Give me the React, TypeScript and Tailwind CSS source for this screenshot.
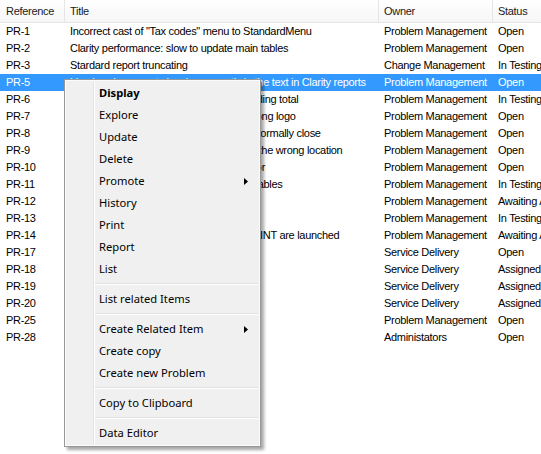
import { Fragment } from "react"

type Row = { ref: string; title: string; owner: string; status: string }

const rows: Row[] = [
  { ref: "PR-1", title: 'Incorrect cast of "Tax codes" menu to StandardMenu', owner: "Problem Management", status: "Open" },
  { ref: "PR-2", title: "Clarity performance: slow to update main tables", owner: "Problem Management", status: "Open" },
  { ref: "PR-3", title: "Stardard report truncating", owner: "Change Management", status: "In Testing" },
  { ref: "PR-5", title: "Line breaks are not showing correctly in the text in Clarity reports", owner: "Problem Management", status: "Open" },
  { ref: "PR-6", title: "Summary report not showing the outstanding total", owner: "Problem Management", status: "In Testing" },
  { ref: "PR-7", title: "Invoices printed from Clarity show the wrong logo", owner: "Problem Management", status: "Open" },
  { ref: "PR-8", title: "Editing windows in Clarity sometimes abnormally close", owner: "Problem Management", status: "Open" },
  { ref: "PR-9", title: "Exported reports are now being saved in the wrong location", owner: "Problem Management", status: "Open" },
  { ref: "PR-10", title: "Login screen displays an unexpected error", owner: "Problem Management", status: "Open" },
  { ref: "PR-11", title: "Slow response when opening all lookup tables", owner: "Problem Management", status: "In Testing" },
  { ref: "PR-12", title: "Unable to log in from remote sites", owner: "Problem Management", status: "Awaiting Approval" },
  { ref: "PR-13", title: "Duplicate entries in audit log", owner: "Problem Management", status: "In Testing" },
  { ref: "PR-14", title: "Errors occurring when multiple jobs of PRINT are launched", owner: "Problem Management", status: "Awaiting Approval" },
  { ref: "PR-17", title: "Printer offline", owner: "Service Delivery", status: "Open" },
  { ref: "PR-18", title: "Email not syncing", owner: "Service Delivery", status: "Assigned" },
  { ref: "PR-19", title: "VPN drops", owner: "Service Delivery", status: "Assigned" },
  { ref: "PR-20", title: "Slow network", owner: "Service Delivery", status: "Assigned" },
  { ref: "PR-25", title: "Server reboot", owner: "Problem Management", status: "Open" },
  { ref: "PR-28", title: "User access", owner: "Administators", status: "Open" },
]

type Item = { label?: string; bold?: boolean; sub?: boolean; sep?: boolean }

const menu: Item[] = [
  { label: "Display", bold: true },
  { label: "Explore" },
  { label: "Update" },
  { label: "Delete" },
  { label: "Promote", sub: true },
  { label: "History" },
  { label: "Print" },
  { label: "Report" },
  { label: "List" },
  { sep: true },
  { label: "List related Items" },
  { sep: true },
  { label: "Create Related Item", sub: true },
  { label: "Create copy" },
  { label: "Create new Problem" },
  { sep: true },
  { label: "Copy to Clipboard" },
  { sep: true },
  { label: "Data Editor" },
]

const tableFont = { fontFamily: '"Liberation Sans", Arial, sans-serif' }
const menuFont = { fontFamily: '"Segoe UI", "Noto Sans", sans-serif' }

function Gutter() {
  return (
    <Fragment>
      <div className="w-[27px] shrink-0 self-stretch border-r border-[#e2e3e3]" />
      <div className="w-px shrink-0 self-stretch bg-white" />
    </Fragment>
  )
}

export default function App() {
  return (
    <div className="relative h-[454px] w-[541px] overflow-hidden bg-white text-black">
      <div className="w-[700px] text-[11px] tracking-[-0.3px]" style={tableFont}>
        <div className="flex h-[23px] border-b border-[#e5e5e5] bg-gradient-to-b from-white to-[#f6f6f6] leading-[22px] text-[#1a1a1a]">
          <div className="w-[65px] border-r border-[#e5e5e5] pl-[6px]">Reference</div>
          <div className="w-[314px] border-r border-[#e5e5e5] pl-[5px]">Title</div>
          <div className="w-[114px] border-r border-[#e5e5e5] pl-[5px]">Owner</div>
          <div className="flex-1 pl-[5px]">Status</div>
        </div>
        {rows.map((r) => (
          <div
            key={r.ref}
            className={
              r.ref === "PR-5"
                ? "flex h-[17px] bg-[#3399ff] leading-[17px] text-white"
                : "flex h-[17px] leading-[17px]"
            }
          >
            <div className="w-[65px] whitespace-nowrap pl-[6px]">{r.ref}</div>
            <div className="w-[314px] overflow-hidden whitespace-nowrap pl-[5px]">{r.title}</div>
            <div className="w-[114px] whitespace-nowrap pl-[5px]">{r.owner}</div>
            <div className="flex-1 whitespace-nowrap pl-[5px]">{r.status}</div>
          </div>
        ))}
      </div>

      <div
        className="absolute left-[64px] top-[79px] w-[197px] border border-[#979797] bg-[#f0f0f0] p-[2px] text-[11.2px] shadow-[inset_0_0_0_1px_#fbfbfb,3px_3px_3px_rgba(0,0,0,0.35)]"
        style={menuFont}
      >
        {menu.map((m, i) =>
          m.sep ? (
            <div key={i} className="flex h-[8px] items-center">
              <Gutter />
              <div className="flex-1">
                <div className="h-px bg-[#e0e0e0]" />
                <div className="h-px bg-white" />
              </div>
            </div>
          ) : (
            <div key={i} className="flex h-[22px] items-center">
              <Gutter />
              <span className={m.bold ? "flex-1 pl-[4px] font-bold" : "flex-1 pl-[4px]"}>{m.label}</span>
              {m.sub && (
                <svg width="4" height="7" viewBox="0 0 4 7" className="mr-[10px]">
                  <path d="M0 0 L4 3.5 L0 7 Z" fill="#000" />
                </svg>
              )}
            </div>
          )
        )}
      </div>
    </div>
  )
}
